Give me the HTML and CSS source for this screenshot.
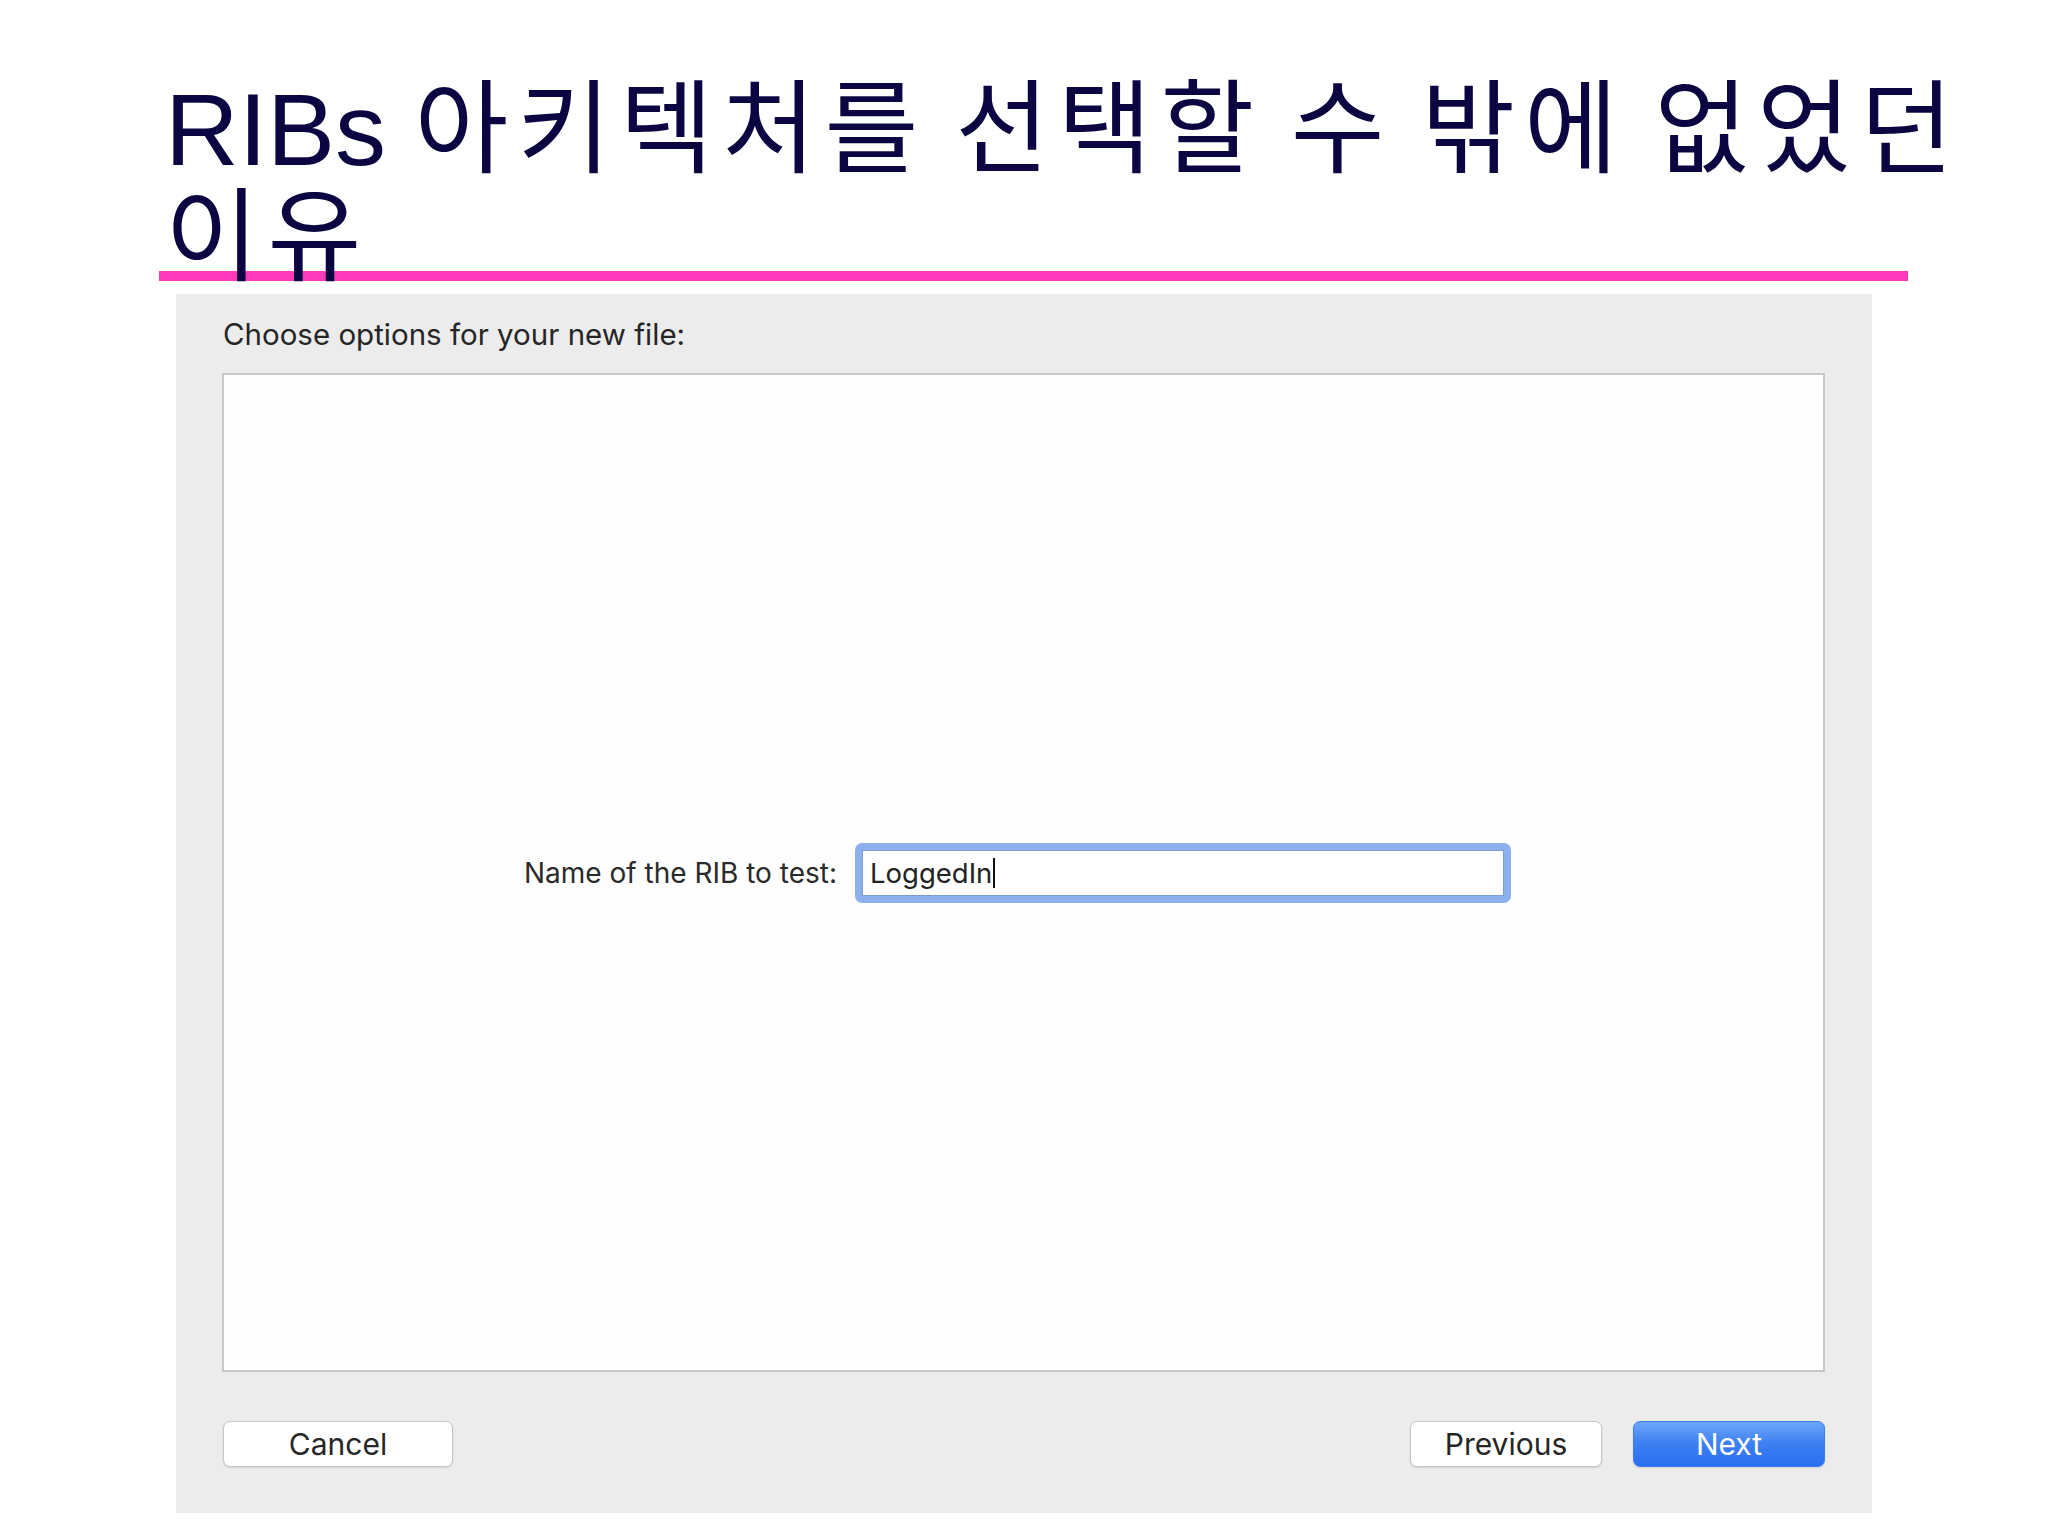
FILE: index.html
```html
<!DOCTYPE html>
<html lang="ko">
<head>
<meta charset="utf-8">
<title>RIBs 아키텍처를 선택할 수 밖에 없었던 이유</title>
<link rel="stylesheet" href="styles.css">
</head>
<body>
<div class="header">
  <h1 class="title"><span class="latin">RIBs</span> <span class="ko">아키텍처를 선택할 수 밖에 없었던</span><br><span class="ko">이유</span></h1>
</div>
<div class="dialog">
  <div class="dlg-head">Choose options for your new file:</div>
  <div class="panel">
    <div class="field-row">
      <span class="field-label">Name of the RIB to test:</span>
      <div class="field"><span class="field-text">LoggedIn</span><span class="caret"></span></div>
    </div>
  </div>
  <div class="buttons">
    <button class="btn btn-cancel">Cancel</button>
    <div class="btn-group">
      <button class="btn btn-small">Previous</button>
      <button class="btn btn-small btn-primary">Next</button>
    </div>
  </div>
</div>
</body>
</html>
```
FILE: styles.css
```css
html, body {
  margin: 0;
  padding: 0;
  background: #ffffff;
}

.header {
  margin-left: 159px;
  width: 1749px;
  height: 195px;
  padding-top: 76px;
  border-bottom: 10px solid #fd3ab9;
}

.title {
  margin: 0;
  width: 1880px;
  padding-left: 6px;
  font-family: "Liberation Sans", "Noto Sans CJK KR", sans-serif;
  font-weight: 400;
  font-size: 102px;
  line-height: 108px;
  color: #0b0541;
  word-break: keep-all;
  white-space: nowrap;
}

.ko {
  letter-spacing: 8.7px;
  word-spacing: -9px;
}

.dialog {
  margin: 13px 0 0 176px;
  width: 1696px;
  height: 1219px;
  box-sizing: border-box;
  background: #ececed;
  padding: 22px 47px 0 46px;
  display: flex;
  flex-direction: column;
  font-family: Inter, "Liberation Sans", sans-serif;
  color: #262626;
}

.dlg-head {
  font-size: 29.5px;
  line-height: 36px;
  height: 36px;
  margin-bottom: 21px;
  padding-left: 1px;
}

.panel {
  height: 999px;
  box-sizing: border-box;
  border: 2px solid #c8c8c8;
  background: #fefefe;
  display: flex;
  align-items: center;
  justify-content: center;
  padding-right: 12px;
}

.field-row {
  display: flex;
  align-items: center;
}

.field-label {
  font-size: 28px;
  line-height: 34px;
  margin-right: 18px;
  color: #2a2a2a;
}

.field {
  width: 656px;
  height: 60px;
  box-sizing: border-box;
  border: 7px solid #8db0ef;
  border-radius: 7px;
  box-shadow: inset 0 0 0 1px #7b9bd6;
  background: #ffffff;
  display: flex;
  align-items: center;
  padding-left: 8px;
}

.field-text {
  font-size: 27.5px;
  line-height: 34px;
  color: #222222;
}

.caret {
  display: inline-block;
  width: 2px;
  height: 30px;
  background: #111111;
  margin-left: 1px;
}

.buttons {
  margin-top: 49px;
  display: flex;
  justify-content: space-between;
  padding-left: 1px;
}

.btn-group {
  display: flex;
  gap: 31px;
}

.btn {
  height: 46px;
  box-sizing: border-box;
  padding: 0;
  font-family: Inter, "Liberation Sans", sans-serif;
  font-size: 30px;
  line-height: 44px;
  color: #262626;
  background: #ffffff;
  border: 1px solid #c6c6c6;
  border-radius: 7px;
  box-shadow: 0 1px 2px rgba(0, 0, 0, 0.12);
}

.btn-cancel {
  width: 230px;
}

.btn-small {
  width: 192px;
}

.btn-primary {
  color: #ffffff;
  border: 1px solid #3f80ef;
  background: linear-gradient(to bottom, #6ea6f7 0%, #3f82f4 45%, #2a6ef0 100%);
}
```
